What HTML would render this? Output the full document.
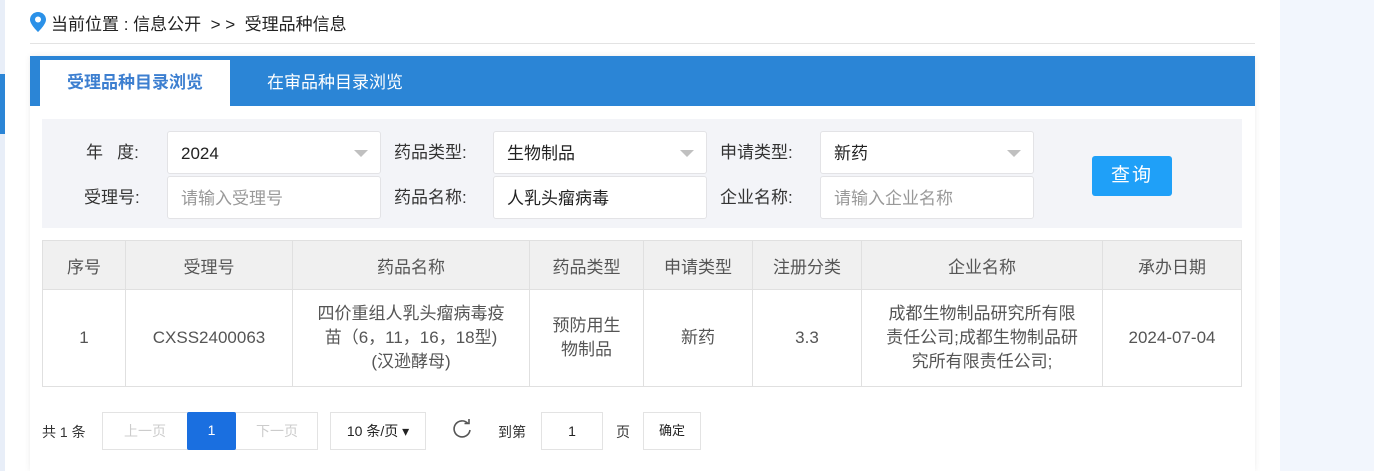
<!DOCTYPE html>
<html><head><meta charset="utf-8"><style>
*{box-sizing:border-box;margin:0;padding:0}
body{width:1374px;height:471px;overflow:hidden;background:#f2f6fd;font-family:"Liberation Sans","Noto Sans CJK SC",sans-serif;color:#333;position:relative}
.abs{position:absolute}
#main{left:5px;top:0;width:1275px;height:471px;background:#fff}
.inp{position:absolute;background:#fff;border:1px solid #e3e3e6;border-radius:3px;font-size:17px;padding-left:13px;line-height:43px;height:43px;width:214px}
.tri{position:absolute;right:12px;top:18px;width:0;height:0;border-left:7px solid transparent;border-right:7px solid transparent;border-top:7px solid #c0c0c0}
.lbl{position:absolute;font-size:17px;color:#333;line-height:20px}
table{border-collapse:collapse;position:absolute;left:42px;top:240px;width:1200px}
td,th{border:1px solid #e0e0e0;text-align:center;font-size:17px;color:#555;font-weight:normal}
th{background:#f0f0f0;height:49px}
td{height:97px;line-height:24px}
.pb{position:absolute;top:412px;height:38px;border:1px solid #e3e3e3;font-size:14px;line-height:36px;text-align:center}
</style></head><body>
<div class="abs" style="left:0;top:0;width:5px;height:471px;background:#e8eef8"></div>
<div class="abs" style="left:0;top:74px;width:5px;height:60px;background:#2b85d6"></div>
<div class="abs" id="main"></div>
<svg class="abs" style="left:30px;top:12px" width="16" height="20" viewBox="0 0 16 20"><path d="M8 0C3.6 0 0 3.4 0 7.6 0 12.5 8 20 8 20s8-7.5 8-12.4C16 3.4 12.4 0 8 0z" fill="#2b91e8"/><circle cx="8" cy="7.5" r="3" fill="#fff"/></svg>
<div class="abs" style="left:51px;top:10px;font-size:17px;color:#222">当前位置 : 信息公开 &nbsp;&gt; &gt; &nbsp;受理品种信息</div>
<div class="abs" style="left:30px;top:43px;width:1225px;height:1px;background:#e3e3e3"></div>
<div class="abs" style="left:30px;top:56px;width:1225px;height:415px;background:#fff;box-shadow:0 0 6px rgba(0,0,0,.08)"></div>
<div class="abs" style="left:30px;top:56px;width:1225px;height:50px;background:#2b85d6"></div>
<div class="abs" style="left:40px;top:60px;width:190px;height:46px;background:#fff;color:#3d7fd0;font-size:17px;font-weight:bold;text-align:center;line-height:46px">受理品种目录浏览</div>
<div class="abs" style="left:267px;top:60px;height:46px;color:#fff;font-size:17px;line-height:46px">在审品种目录浏览</div>
<div class="abs" style="left:42px;top:119px;width:1200px;height:109px;background:#f3f4f8"></div>
<div class="lbl" style="left:86px;top:143px">年&nbsp;&nbsp;&nbsp;度:</div>
<div class="lbl" style="left:84px;top:188px">受理号:</div>
<div class="lbl" style="left:394px;top:143px">药品类型:</div>
<div class="lbl" style="left:394px;top:188px">药品名称:</div>
<div class="lbl" style="left:720px;top:143px">申请类型:</div>
<div class="lbl" style="left:720px;top:188px">企业名称:</div>
<div class="inp" style="left:167px;top:131px;color:#222">2024<span class="tri"></span></div>
<div class="inp" style="left:167px;top:176px;color:#999">请输入受理号</div>
<div class="inp" style="left:493px;top:131px;color:#222">生物制品<span class="tri"></span></div>
<div class="inp" style="left:493px;top:176px;color:#222">人乳头瘤病毒</div>
<div class="inp" style="left:820px;top:131px;color:#222">新药<span class="tri"></span></div>
<div class="inp" style="left:820px;top:176px;color:#999">请输入企业名称</div>
<div class="abs" style="left:1092px;top:156px;width:80px;height:40px;background:#1fa0f8;border-radius:3px;color:#fff;font-size:19px;line-height:40px;text-align:center;letter-spacing:2px">查询</div>
<table>
<tr><th style="width:83px">序号</th><th style="width:167px">受理号</th><th style="width:237px">药品名称</th><th style="width:114px">药品类型</th><th style="width:109px">申请类型</th><th style="width:109px">注册分类</th><th style="width:241px">企业名称</th><th>承办日期</th></tr>
<tr><td>1</td><td>CXSS2400063</td><td>四价重组人乳头瘤病毒疫<br>苗（6，11，16，18型)<br>(汉逊酵母)</td><td>预防用生<br>物制品</td><td>新药</td><td>3.3</td><td>成都生物制品研究所有限<br>责任公司;成都生物制品研<br>究所有限责任公司;</td><td>2024-07-04</td></tr>
</table>
<div class="abs" style="left:42px;top:422px;font-size:14px">共 1 条</div>
<div class="pb" style="left:102px;width:216px;color:#ccc"><span style="position:absolute;left:0;width:84px">上一页</span><span style="position:absolute;left:84px;top:-1px;width:49px;height:38px;background:#1a6fe0;color:#fff;border-radius:2px">1</span><span style="position:absolute;left:133px;width:82px">下一页</span></div>
<div class="pb" style="left:330px;width:96px;color:#222">10 条/页 ▾</div>
<svg class="abs" style="left:451px;top:418px" width="22" height="22" viewBox="0 0 22 22"><path d="M17 5.5A8 8 0 1 0 19 12" fill="none" stroke="#555" stroke-width="1.6"/><path d="M13.5 5.5h4.5V1" fill="none" stroke="#555" stroke-width="1.6"/></svg>
<div class="abs" style="left:498px;top:422px;font-size:14px">到第</div>
<div class="pb" style="left:541px;width:62px;color:#222">1</div>
<div class="abs" style="left:616px;top:422px;font-size:14px">页</div>
<div class="pb" style="left:643px;width:58px;color:#222;font-size:13px">确定</div>
</body></html>
